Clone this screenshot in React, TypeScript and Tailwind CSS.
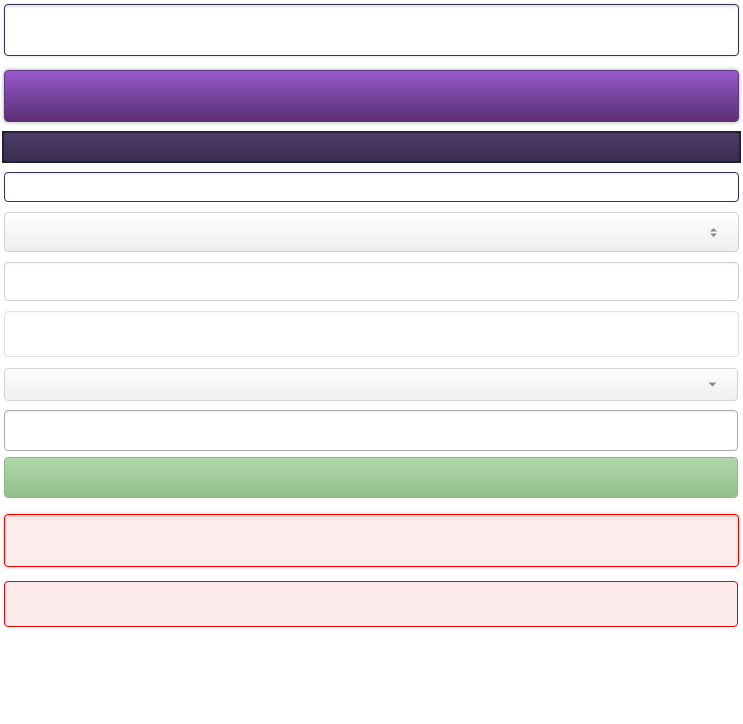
import React from 'react';

function UpDown() {
  return (
    <svg width="9" height="11" viewBox="0 0 9 11" className="shrink-0">
      <path d="M4.5 1 L8 4.5 L1 4.5 Z" fill="#8a8a8a" />
      <path d="M4.5 10 L8 6.5 L1 6.5 Z" fill="#8a8a8a" />
    </svg>
  );
}

function Down() {
  return (
    <svg width="9" height="5" viewBox="0 0 9 5" className="shrink-0">
      <path d="M0.5 0.5 L8.5 0.5 L4.5 4.5 Z" fill="#8a8a8a" />
    </svg>
  );
}

export default function App() {
  return (
    <div className="w-[743px] h-[724px] bg-white font-['Liberation_Sans',sans-serif] flex flex-col px-[4px] pt-[4px]">
      {/* text area */}
      <div className="h-[52px] w-[735px] rounded-[4px] border border-[#3b3154] bg-white shadow-[inset_0_2px_3px_rgba(0,0,0,0.12),0_0_3px_rgba(0,0,0,0.15)]" />

      {/* purple button */}
      <div className="mt-[14px] h-[52px] w-[735px] rounded-[4px] border border-[#5a3a78] bg-gradient-to-b from-[#9858cc] to-[#5a2f74] shadow-[0_0_4px_rgba(0,0,0,0.35)]" />

      {/* dark bar */}
      <div className="mt-[9px] -ml-[2px] h-[32px] w-[739px] bg-[#241c30] p-[1px]">
        <div className="h-full w-full rounded-[3px] border border-[#2c2240] bg-gradient-to-b from-[#4c3c68] to-[#3a2d50]" />
      </div>

      {/* small input */}
      <div className="mt-[9px] h-[30px] w-[735px] rounded-[4px] border border-[#3e2d5c] bg-white shadow-[inset_0_1px_2px_rgba(0,0,0,0.08)]" />

      {/* select with up/down */}
      <div className="mt-[10px] h-[40px] w-[735px] rounded-[4px] border border-[#d2d2d2] bg-gradient-to-b from-[#ffffff] via-[#f6f6f6] to-[#eeeeee] flex items-center justify-end pr-[20px]">
        <UpDown />
      </div>

      {/* input */}
      <div className="mt-[10px] h-[39px] w-[735px] rounded-[4px] border border-[#d0d0d0] bg-white shadow-[inset_0_1px_2px_rgba(0,0,0,0.05)]" />

      {/* input lighter */}
      <div className="mt-[10px] h-[46px] w-[735px] rounded-[4px] border border-[#e2e2e2] bg-white shadow-[inset_0_1px_3px_rgba(0,0,0,0.04)]" />

      {/* select with down arrow */}
      <div className="mt-[11px] h-[33px] w-[734px] rounded-[4px] border border-[#d4d4d4] bg-gradient-to-b from-[#ffffff] via-[#f5f5f5] to-[#f0f0f0] flex items-center justify-end pr-[20px]">
        <Down />
      </div>

      {/* gray border input */}
      <div className="mt-[9px] h-[41px] w-[734px] rounded-[4px] border border-[#ababab] bg-white shadow-[inset_0_1px_2px_rgba(0,0,0,0.08)]" />

      {/* green */}
      <div className="mt-[6px] h-[41px] w-[734px] rounded-[4px] border border-[#90b98a] bg-gradient-to-b from-[#b0d8aa] to-[#92bf8b]" />

      {/* red 1 */}
      <div className="mt-[16px] h-[53px] w-[735px] rounded-[4px] border border-[#ee0000] bg-[#fdeeed] shadow-[inset_0_2px_3px_rgba(0,0,0,0.15),0_0_4px_rgba(0,0,0,0.2)]" />

      {/* red 2 */}
      <div className="mt-[14px] h-[46px] w-[734px] rounded-[4px] border border-[#ee0000] bg-[#fdeaea]" />
    </div>
  );
}
